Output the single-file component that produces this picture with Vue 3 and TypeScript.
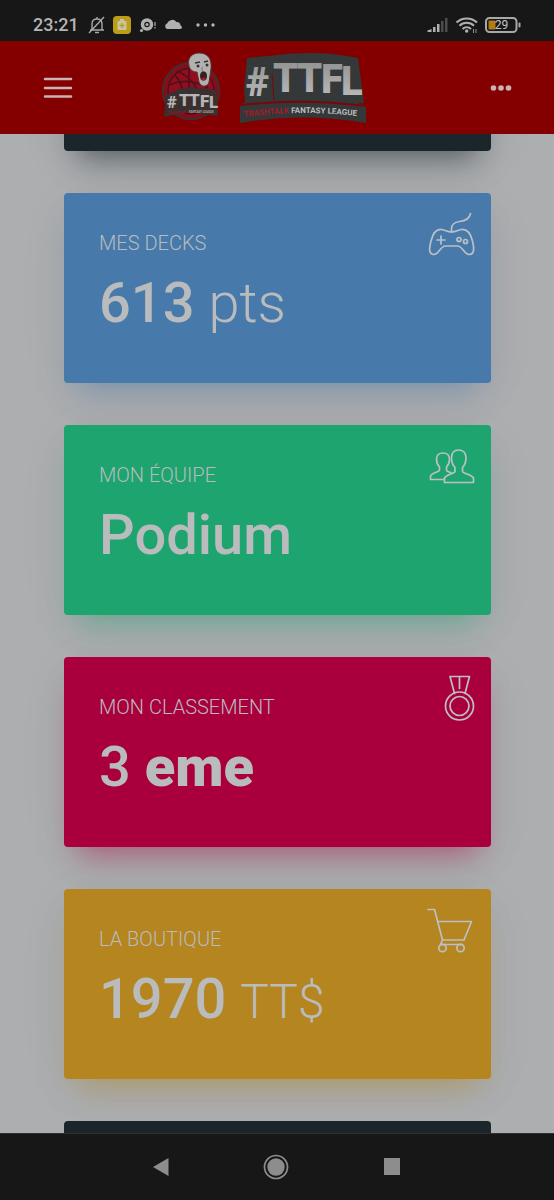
<script setup lang="ts">
interface Part {
  text: string
  tone: 'medium' | 'bold' | 'light' | 'unit'
}

interface Card {
  id: string
  label: string
  parts: Part[]
}

const cards: Card[] = [
  { id: 'decks', label: 'MES DECKS', parts: [{ text: '613', tone: 'medium' }, { text: 'pts', tone: 'light' }] },
  { id: 'team', label: 'MON ÉQUIPE', parts: [{ text: 'Podium', tone: 'medium' }] },
  { id: 'rank', label: 'MON CLASSEMENT', parts: [{ text: '3', tone: 'medium' }, { text: 'eme', tone: 'bold' }] },
  { id: 'shop', label: 'LA BOUTIQUE', parts: [{ text: '1970', tone: 'medium' }, { text: 'TT$', tone: 'unit' }] },
]
</script>

<template>
  <div class="screen">
    <div class="status">
      <span class="time">23:21</span>
      <svg class="st-left" width="128" height="20" viewBox="0 0 128 20" aria-hidden="true">
        <g fill="none" stroke="#a9a9a9" stroke-width="1.4">
          <path d="M3 15h14M5 15V9c0-3 2-5 5-5s5 2 5 5v6M10 4V2M8 17.5h4M2 18 17 2" />
        </g>
        <rect x="26" y="1" width="18" height="18" rx="4" fill="#bd9d15" />
        <path d="M31.500 6h7a1 1 0 0 1 1 1v7a1 1 0 0 1-1 1h-7a1 1 0 0 1-1-1V7a1 1 0 0 1 1-1zM33 4h4v2h-4z" fill="#c9c3a8" />
        <path d="M35 8v5M32.500 10.500h5" stroke="#bd9d15" stroke-width="1.300" />
        <circle cx="60" cy="9.500" r="4.500" fill="none" stroke="#b0b0b0" stroke-width="3.500" />
        <circle cx="60" cy="9.500" r="1.500" fill="#b0b0b0" />
        <circle cx="54.500" cy="15.500" r="1.600" fill="#b0b0b0" />
        <path d="M68 7v4M68 12v1.500" stroke="#b0b0b0" stroke-width="1.200" />
        <path d="M80 14a3 3 0 0 1 0-5.500 5.500 5.500 0 0 1 9.500-1.500 3.500 3.500 0 0 1 4 3.500c2 .6 1.700 3.500 0 3.500z" fill="#b0b0b0" />
        <g fill="#b5b5b5"><circle cx="111" cy="10" r="1.700" /><circle cx="118.500" cy="10" r="1.700" /><circle cx="126" cy="10" r="1.700" /></g>
      </svg>
      <svg class="st-right" width="96" height="18" viewBox="0 0 96 18" aria-hidden="true">
        <g fill="#b0b0b0">
          <path d="M1.500 16v-1.500L5.500 13v3z" />
          <rect x="7" y="11" width="2.500" height="5" />
          <rect x="11" y="8" width="2.500" height="8" />
        </g>
        <g fill="#4c4c4c">
          <rect x="15" y="5" width="2.500" height="11" />
          <rect x="19" y="2" width="2.500" height="14" />
        </g>
        <g fill="none" stroke="#b0b0b0" stroke-width="2">
          <path d="M30.500 6.500c5.500-5.500 15-5.500 20.500 0M33.500 9.800c4-4 10.500-4 14.500 0M36.500 13c2.500-2.500 6-2.500 8.500 0" />
        </g>
        <circle cx="40.700" cy="15" r="1.700" fill="#b0b0b0" />
        <path d="M47.500 13v4M50 13v4" stroke="#909090" />
        <rect x="60" y="2" width="30.500" height="14" rx="3.500" fill="none" stroke="#a8a8a8" stroke-width="2" />
        <rect x="62.500" y="4.500" width="7" height="9" rx="1" fill="#b57a10" />
        <rect x="92.500" y="6.500" width="2" height="5" rx="1" fill="#a8a8a8" />
        <text x="75.500" y="13" class="battery">29</text>
      </svg>
    </div>

    <header class="header">
      <button class="icon-btn" type="button" aria-label="Menu">
        <svg width="30" height="24" viewBox="0 0 30 24">
          <path d="M2 3h26M2 12h26M2 20.500h26" stroke="#c9b3b3" stroke-width="2.500" stroke-linecap="round" />
        </svg>
      </button>
      <a class="brand" href="#" aria-label="TrashTalk Fantasy League">
        <svg width="62" height="74" viewBox="0 0 62 74">
          <circle cx="30" cy="40" r="28" fill="#8b0b18" stroke="#4a2a2c" stroke-width="2.500" />
          <circle cx="30" cy="40" r="23" fill="#920d20" stroke="#4a1318" stroke-width="1.500" />
          <path d="M13 24c7 5 9 15 8 25M28 17v30M8 34c14-6 27-4 39 3M16 20c11 5 20 13 23 27" fill="none" stroke="#501018" stroke-width="1.700" />
          <path d="M28 15c-2-8 3-13 10-13 9 0 13 6 12 16l-2 13c-1 5-8 6-10 0l-2-10c-4 0-7-2-8-6z" fill="#b3b1b0" stroke="#5b3333" />
          <path d="M34 12l5-1M43 11l4-1" stroke="#333" stroke-width="1.500" />
          <circle cx="37" cy="15" r="1.500" fill="#333" /><circle cx="46" cy="14" r="1.500" fill="#333" />
          <path d="M41 16v4l2 1" fill="none" stroke="#777" />
          <ellipse cx="42.500" cy="25" rx="3.500" ry="4.500" fill="#342021" /><path d="M40 28c2-2 4-2 5 0-1 2-4 2-5 0z" fill="#a51b2b" />
          <path d="M5 44 18 38 30 36l25 3 2 26-30-4-24 5z" fill="#3a3030" />
          <text class="badge-text"><tspan x="6" y="57">#</tspan><tspan x="18" y="55">T</tspan><tspan x="28" y="55">T</tspan><tspan x="39" y="56">F</tspan><tspan x="48" y="57">L</tspan></text>
          <text class="badge-small" x="7" y="63" fill="#8e1820">TRASHTALK</text>
          <text class="badge-small" x="28" y="62" fill="#a9a4a4">FANTASY LEAGUE</text>
        </svg>
        <svg width="132" height="76" viewBox="0 0 132 76">
          <defs>
            <linearGradient id="metal" x1="0" y1="0" x2="0" y2="1">
              <stop offset="0" stop-color="#8c8c8c" /><stop offset="1" stop-color="#c2c2c2" />
            </linearGradient>
          </defs>
          <path d="M10 8 32 6Q78-1 121 8l6 45-2 1 4 2v17Q66 62 3 73V55l5-3-1-13z" fill="#343838" />
          <path d="M3 55Q66 48 129 56" fill="none" stroke="#7b0508" stroke-width="2" />
          <path d="M35 23l2 27M126 54l-4-1" fill="none" stroke="#7b0508" />
          <text class="logo-text"><tspan x="9" y="46">#</tspan><tspan x="36" y="42">T</tspan><tspan x="60" y="42">T</tspan><tspan x="84" y="43">F</tspan><tspan x="104" y="45">L</tspan></text>
          <path id="banner-line" d="M7 67Q67 59 127 67" fill="none" />
          <text class="logo-small"><textPath href="#banner-line"><tspan fill="#a41b29">TRASHTALK </tspan><tspan fill="#bdbdbd">FANTASY LEAGUE</tspan></textPath></text>
        </svg>
      </a>
      <button class="icon-btn more" type="button" aria-label="Plus">
        <svg width="24" height="8" viewBox="0 0 24 8" fill="#c9b3b3">
          <circle cx="4.500" cy="4" r="2.800" /><circle cx="12" cy="4" r="2.800" /><circle cx="19.500" cy="4" r="2.800" />
        </svg>
      </button>
    </header>

    <main class="content">
      <div class="dark-card top"></div>
      <a v-for="card in cards" :key="card.id" href="#" class="card" :class="card.id">
        <span class="body">
          <span class="label">{{ card.label }}</span>
          <span class="value">
            <span v-for="part in card.parts" :key="part.text" :class="part.tone">{{ part.text + ' ' }}</span>
          </span>
        </span>
        <svg class="icon" width="48" height="48" viewBox="0 0 48 48" aria-hidden="true">
          <template v-if="card.id === 'decks'">
            <path d="M23.500 21v-3c0-5 4-7 8-7.500 6-.500 10-2.500 11-8" />
            <path d="M23.500 21c-5 0-5.500-2-10-2.500C8 18 5 22 3 30c-1.500 6-3 13 2.500 13.500C11 44 12 35 17.500 35h12C35 35 36 44 41.500 43.500 47 43 46 36 44.500 30c-2-8-5.500-12-11-11.500-4.500.500-5 2.500-10 2.500z" />
            <path d="M13 25v8M9 29h8" /><circle cx="31" cy="28.500" r="2" /><circle cx="37.500" cy="30.500" r="2" />
          </template>
          <template v-else-if="card.id === 'team'">
            <path d="M27 24.500c-2.500-2.500-3.500-6.500-3.500-10C23.500 10 26 7 30.500 7s7.500 3 7.500 7.500c0 3.500-1 7.500-3.500 10v4c0 2 9 2.500 11 6.500v4.500h-29V35c2-4 10.500-4.500 10.500-6.500z" />
            <path d="M15.500 36.500h-13v-3.500c1.500-3.500 9-4 9-6v-3c-2-2-3-5-3-8 0-3.500 2.500-6 6.500-6s6.500 2.500 6.500 6c0 3-1 6-3 8v3c0 1.500 3 2 4.500 2.500" />
          </template>
          <template v-else-if="card.id === 'rank'">
            <path d="M26.500 18.500 22 1.500h19.500L37 18.500M31.500 2v11.500" /><circle cx="31.500" cy="31" r="14" /><circle cx="31.500" cy="31" r="9.500" />
          </template>
          <template v-else>
            <path d="M0 2.500h6.500l8 30.500h21.500l7.500-18.500H9.700M14.500 33l-2 4.500h22" /><circle cx="14.500" cy="41" r="3.700" /><circle cx="32.500" cy="41" r="3.700" />
          </template>
        </svg>
      </a>
      <div class="dark-card bottom"></div>
    </main>

    <nav class="navbar" aria-label="Système">
      <button type="button" aria-label="Retour"><svg width="18" height="20" viewBox="0 0 18 20"><path d="M16.500 1v18L1 10z" fill="#8d8d8d" /></svg></button>
      <button type="button" aria-label="Accueil"><svg width="26" height="26" viewBox="0 0 26 26"><circle cx="13" cy="13" r="11.500" fill="none" stroke="#8d8d8d" stroke-width="1.700" /><circle cx="13" cy="13" r="8.700" fill="#8d8d8d" /></svg></button>
      <button type="button" aria-label="Applications récentes"><svg width="18" height="18" viewBox="0 0 18 18"><rect x="1" width="16" height="17" fill="#8d8d8d" /></svg></button>
    </nav>
  </div>
</template>

<style>
body { margin: 0; background: #acaeb0; }
</style>

<style scoped>
* { box-sizing: border-box; }
.screen { min-height: 100vh; display: flex; flex-direction: column; font-family: Roboto, "Liberation Sans", sans-serif; }
button { border: 0; padding: 0; background: none; display: flex; cursor: pointer; }
svg { display: block; overflow: visible; }

.status { height: 41px; padding: 9px 32px 0 33px; display: flex; align-items: center; background: #171717; color: #b5b5b5; }
.time { font-size: 18px; line-height: 20px; font-weight: 500; }
.st-left { margin-left: 8px; }
.st-right { margin-left: auto; }
.battery { font-size: 12px; text-anchor: middle; fill: #c4c4c4; }

.header { height: 93px; padding: 0 41px 0 43px; display: flex; align-items: center; justify-content: space-between; background: #840000; position: relative; z-index: 1; }
.brand { display: flex; align-items: center; gap: 14px; margin-right: 32px; }
.badge-text { font-weight: 900; font-size: 17px; fill: #b5b5b5; }
.badge-small { font-weight: 700; font-size: 3px; }
.logo-text { font-weight: 900; font-size: 40px; fill: url(#metal); }
.logo-small { font-weight: 700; font-size: 8px; }

.content { flex: 1; padding: 0 63px 0 64px; display: flex; flex-direction: column; gap: 42px; overflow: hidden; background: #acaeb0; }
.dark-card { background: #1b262a; border-radius: 4px; }
.dark-card.top { flex: none; height: 190px; margin-top: -173px; box-shadow: 0 20px 28px -14px #1b262a99, 0 8px 60px #0000000d; }
.dark-card.bottom { flex: 1; min-height: 12px; border-radius: 4px 4px 0 0; }

.card { min-height: 190px; padding: 18px 15px 18px 35px; display: flex; justify-content: space-between; align-items: flex-start; border-radius: 4px; color: #b9bbbd; text-decoration: none; }
.decks { background: #477aab; box-shadow: 0 20px 28px -14px #477aab80, 0 8px 60px #0000000a; }
.team { background: #1da46f; box-shadow: 0 20px 28px -14px #1da46f80, 0 8px 60px #0000000a; }
.rank { background: #a9003d; box-shadow: 0 20px 28px -14px #a9003d80, 0 8px 60px #0000000a; }
.shop { background: #b58520; box-shadow: 0 20px 28px -14px #b5852080, 0 8px 60px #0000000a; }
.body { padding-top: 20px; display: flex; flex-direction: column; gap: 16px; }
.label { font-size: 20px; line-height: 24px; font-weight: 300; }
.value { font-size: 56px; line-height: 64px; white-space: pre-wrap; }
.medium { font-weight: 500; }
.light { font-weight: 300; }
.bold { font-weight: 900; }
.unit { font-weight: 300; font-size: 48px; }
.icon { flex: none; fill: none; stroke: #bcc0c4; stroke-width: 1.7px; stroke-linecap: round; stroke-linejoin: round; }

.navbar { height: 67px; padding: 0 104px 0 103px; display: grid; grid-template-columns: repeat(3, 1fr); align-items: center; justify-items: center; background: #171717; border-top: 1px solid #303030; }
</style>
